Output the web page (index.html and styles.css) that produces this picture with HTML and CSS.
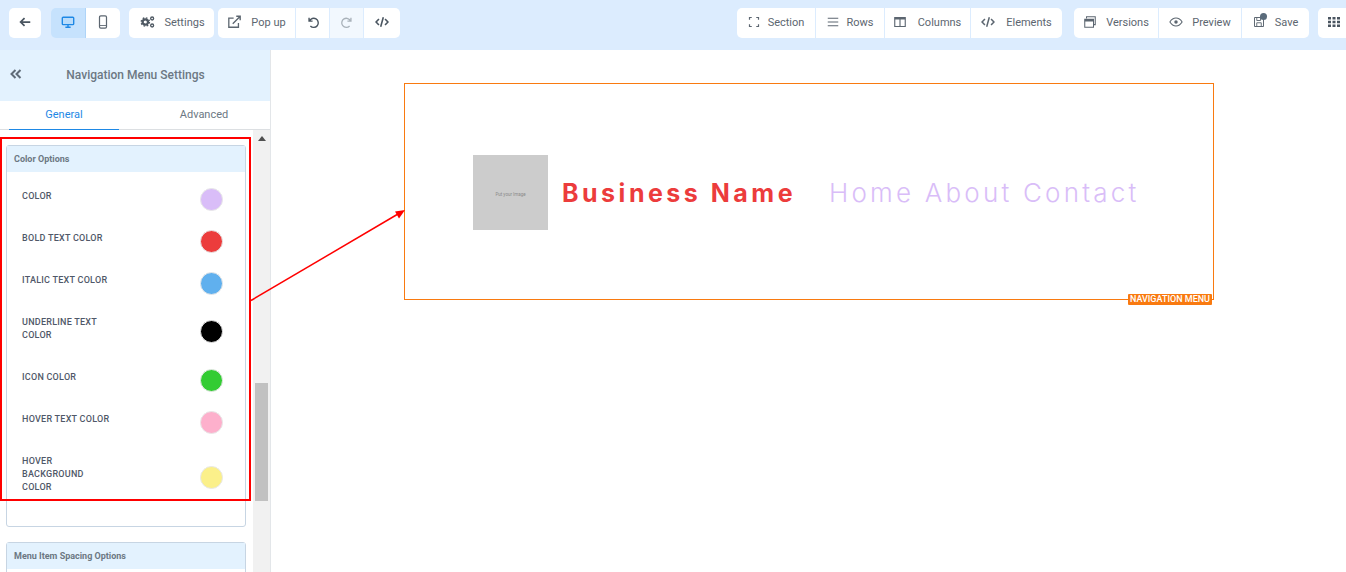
FILE: index.html
```html
<!DOCTYPE html>
<html lang="en">
<head>
    <meta charset="UTF-8">
    <meta name="viewport" content="width=device-width, initial-scale=1.0">
    <title>Navigation Menu Settings</title>
    <link rel="stylesheet" href="styles.css">
</head>
<body>
    <header class="toolbar">
        <div class="group back-group">
            <button class="tool icon-only"><svg class="icon" viewBox="0 0 16 16"><path d="M14 8H3M7.500 3.500 3 8l4.500 4.500" fill="none" stroke="#4a5560" stroke-width="2"/></svg></button>
        </div>
        <div class="group device-group">
            <button class="tool device active"><svg class="icon" viewBox="0 0 16 16"><rect x="1.500" y="2.500" width="13" height="8.500" rx="1" fill="#b9dcfb" stroke="#1e88e5" stroke-width="1.600"/><path d="M5 14h6M8 11v3" stroke="#1e88e5" stroke-width="1.600"/></svg></button>
            <button class="tool device device-phone"><svg class="icon" viewBox="0 0 16 16"><rect x="4" y="1" width="8" height="14" rx="1.500" fill="none" stroke="#5c6670" stroke-width="1.400"/><path d="M4.500 12h7" stroke="#5c6670"/></svg></button>
        </div>
        <div class="group">
            <button class="tool settings"><svg class="icon icon-wide" viewBox="0 0 16 16"><circle cx="5.500" cy="8" r="3.100" fill="none" stroke="#4f5963" stroke-width="2.600"/><circle cx="5.500" cy="8" r="4.700" fill="none" stroke="#4f5963" stroke-width="1.600" stroke-dasharray="1.900 1.800"/><circle cx="13.300" cy="4" r="1.700" fill="none" stroke="#4f5963" stroke-width="1.500"/><circle cx="13.300" cy="12" r="1.700" fill="none" stroke="#4f5963" stroke-width="1.500"/></svg>Settings</button>
        </div>
        <div class="group">
            <button class="tool popup"><svg class="icon icon-wide" viewBox="0 0 16 16"><path d="M12.500 9v5h-11V3.500H7" fill="none" stroke="#5c6670" stroke-width="1.500"/><path d="M6 10 14 2M10 1.500h4.500V6" fill="none" stroke="#5c6670" stroke-width="1.600"/></svg>Pop up</button>
            <button class="tool undo icon-only"><svg class="icon" viewBox="0 0 16 16"><path d="M3.500 3v4h4M4 7a5.200 5.200 0 1 1 1 5.500" fill="none" stroke="#4a5560" stroke-width="1.600"/></svg></button>
            <button class="tool undo icon-only disabled"><svg class="icon" viewBox="0 0 16 16"><path d="M12.500 3v4h-4M12 7a5.200 5.200 0 1 0-1 5.500" fill="none" stroke="#a9b2ba" stroke-width="1.500"/></svg></button>
            <button class="tool code icon-only"><svg class="icon" viewBox="0 0 16 16"><path d="M4.500 4.500 1.200 8l3.300 3.500M11.500 4.500 14.800 8l-3.300 3.500M9.500 2.500l-3 11" fill="none" stroke="#4a5560" stroke-width="1.800"/></svg></button>
        </div>
        <div class="spacer"></div>
        <div class="group">
            <button class="tool section"><svg class="icon icon-small" viewBox="0 0 16 16"><path d="M2 5V2h3M11 2h3v3M14 11v3h-3M5 14H2v-3" fill="none" stroke="#5c6670" stroke-width="1.600"/></svg>Section</button>
            <button class="tool rows"><svg class="icon icon-small" viewBox="0 0 16 16"><path d="M1 3h14M1 8h14M1 13h14" stroke="#5c6670" stroke-width="1.500"/></svg>Rows</button>
            <button class="tool columns"><svg class="icon icon-small" viewBox="0 0 16 16"><path d="M1 2h14v12H1z" fill="none" stroke="#5c6670" stroke-width="1.500"/><path d="M1 3.500h14" stroke="#5c6670" stroke-width="2.500"/><path d="M8 3v11" stroke="#5c6670" stroke-width="1.500"/></svg>Columns</button>
            <button class="tool elements"><svg class="icon" viewBox="0 0 16 16"><path d="M4.500 4.500 1.200 8l3.300 3.500M11.500 4.500 14.800 8l-3.300 3.500M9.500 2.500l-3 11" fill="none" stroke="#5c6670" stroke-width="1.700"/></svg>Elements</button>
        </div>
        <div class="group right-group">
            <button class="tool versions"><svg class="icon" viewBox="0 0 16 16"><path d="M4 4V2h10v9h-2" fill="none" stroke="#5c6670" stroke-width="1.200"/><path d="M2 5h10v9H2z" fill="none" stroke="#5c6670" stroke-width="1.200"/><path d="M2 5.500h10v2H2z" fill="#5c6670"/></svg>Versions</button>
            <button class="tool preview"><svg class="icon" viewBox="0 0 16 16"><path d="M1 8c2-3.200 4.300-4.500 7-4.500s5 1.300 7 4.500c-2 3.200-4.300 4.500-7 4.500S3 11.200 1 8z" fill="none" stroke="#5c6670" stroke-width="1.200"/><circle cx="8" cy="8" r="2" fill="#5c6670"/></svg>Preview</button>
            <button class="tool save"><span class="save-icon"><svg class="icon icon-small" viewBox="0 0 16 16"><path d="M2 2h11l1 1v11H2z" fill="none" stroke="#5c6670" stroke-width="1.300"/><path d="M5 2v4h5V2M5 14V9h6v5" fill="none" stroke="#5c6670" stroke-width="1.200"/></svg><span class="dot"></span></span>Save</button>
        </div>
        <div class="group grid-group">
            <button class="tool grid-button"><svg class="icon icon-small" viewBox="0 0 12 12"><path d="M0 1h3v2.500H0zM4.500 1h3v2.500h-3zM9 1h3v2.500H9zM0 4.800h3v2.500H0zM4.500 4.800h3v2.500h-3zM9 4.800h3v2.500H9zM0 8.600h3v2.500H0zM4.500 8.600h3v2.500h-3zM9 8.600h3v2.500H9z" fill="#4a5560"/></svg></button>
        </div>
    </header>

    <div class="main">
        <aside class="sidebar">
            <div class="sidebar-head">
                <svg class="collapse" viewBox="0 0 12 10"><path d="M5.500 1 1.500 5l4 4M10.500 1l-4 4 4 4" fill="none" stroke="#5f6b78" stroke-width="2"/></svg>
                <span class="sidebar-title">Navigation Menu Settings</span>
            </div>
            <div class="tabs">
                <div class="tab tab-active">General</div>
                <div class="tab">Advanced</div>
            </div>
            <div class="scroll-area">
                <div class="panels">
                    <section class="panel">
                        <h3 class="panel-head">Color Options</h3>
                        <div class="color-list">
                            <div class="color-row"><span class="color-label">COLOR</span><span class="swatch swatch-lilac"></span></div>
                            <div class="color-row"><span class="color-label">BOLD TEXT COLOR</span><span class="swatch swatch-red"></span></div>
                            <div class="color-row"><span class="color-label">ITALIC TEXT COLOR</span><span class="swatch swatch-blue"></span></div>
                            <div class="color-row"><span class="color-label">UNDERLINE TEXT COLOR</span><span class="swatch swatch-black"></span></div>
                            <div class="color-row"><span class="color-label">ICON COLOR</span><span class="swatch swatch-green"></span></div>
                            <div class="color-row"><span class="color-label">HOVER TEXT COLOR</span><span class="swatch swatch-pink"></span></div>
                            <div class="color-row"><span class="color-label">HOVER BACKGROUND COLOR</span><span class="swatch swatch-yellow"></span></div>
                        </div>
                    </section>
                    <section class="panel">
                        <h3 class="panel-head">Menu Item Spacing Options</h3>
                        <div class="panel-body"></div>
                    </section>
                </div>
                <div class="scrollbar">
                    <span class="scroll-up"></span>
                    <span class="scroll-thumb"></span>
                </div>
            </div>
        </aside>

        <main class="canvas">
            <div class="nav-element">
                <div class="image-holder"><span>Put your Image</span></div>
                <span class="brand">Business Name</span>
                <nav class="nav-links">Home About Contact</nav>
                <span class="element-tag">NAVIGATION MENU</span>
            </div>
        </main>
    </div>

    <!-- annotation drawn over the screenshot -->
    <div class="callout-box"></div>
    <svg class="callout-arrow" viewBox="0 0 160 100" width="160" height="100">
        <path d="M1 94.500 148 8" fill="none" stroke="#f00" stroke-width="1.500"/>
        <path d="M155 4 145 5.500 149 12.500z" fill="#f00"/>
    </svg>
</body>
</html>
```

FILE: styles.css
```css
* {
    box-sizing: border-box;
}
html, body {
    height: 100%;
}
body {
    font-family: Roboto, sans-serif;
    background: #fff;
    color: #5c6670;
    margin: 0;
    overflow: hidden;
    display: flex;
    flex-direction: column;
}
.toolbar {
    height: 50px;
    flex: none;
    background: #dcecfe;
    display: flex;
    align-items: flex-start;
    padding: 8px 0 0 9px;
    gap: 4px;
    overflow: hidden;
}
.group {
    display: flex;
    gap: 1px;
    height: 30px;
    border-radius: 5px;
    overflow: hidden;
    flex: none;
}
.back-group {
    margin-right: 6px;
}
.device-group {
    margin-right: 5px;
    gap: 0;
}
.spacer {
    flex: 1;
}
.right-group {
    margin-left: 8px;
}
.grid-group {
    margin-left: 5px;
    width: 28px;
    border-radius: 5px 0 0 5px;
}
.tool {
    border: none;
    background: #fff;
    color: #5c6670;
    font-family: Roboto, sans-serif;
    font-size: 11px;
    display: flex;
    align-items: center;
    justify-content: center;
    padding: 0 0 2px;
    height: 30px;
}
.icon {
    width: 14px;
    height: 14px;
    margin-right: 9px;
    flex: none;
}
.icon-wide {
    width: 15px;
    margin-right: 9px;
}
.icon-small {
    width: 12px;
    height: 12px;
    margin-right: 10px;
}
.icon-only {
    width: 32px;
}
.icon-only .icon, .device .icon, .grid-button .icon {
    margin-right: 0;
}
.device {
    width: 35px;
}
.device-phone {
    width: 34px;
}
.device.active {
    background: #c6e2fd;
    border-right: 1px solid #aed4f8;
}
.undo {
    width: 33px;
}
.code {
    width: 36px;
}
.disabled {
    background: #f2f8fe;
}
.settings { width: 85px; padding-left: 2px; }
.popup { width: 77px; }
.section { width: 78px; }
.section .icon { margin-right: 8px; }
.rows { width: 68px; }
.rows .icon { margin-right: 8px; }
.columns { width: 85px; }
.columns .icon { margin-right: 12px; }
.elements { width: 91px; }
.elements .icon { margin-right: 11px; }
.versions { width: 84px; }
.preview { width: 82px; }
.save { width: 67px; }
.grid-button { width: 28px; justify-content: flex-start; padding-left: 10px; }
.save-icon {
    position: relative;
    display: flex;
}
.dot {
    position: absolute;
    top: -3px;
    left: 7px;
    width: 7px;
    height: 7px;
    border-radius: 50%;
    background: #5a6b7b;
}

.main {
    flex: 1;
    display: flex;
    min-height: 0;
}
.sidebar {
    width: 271px;
    flex: none;
    border-right: 1px solid #e3e6e9;
    display: flex;
    flex-direction: column;
    min-height: 0;
}
.sidebar-head {
    height: 51px;
    flex: none;
    background: #e3f2fe;
    position: relative;
    display: flex;
    align-items: center;
    justify-content: center;
    padding-bottom: 2px;
}
.collapse {
    position: absolute;
    left: 10px;
    top: 19px;
    width: 12px;
    height: 10px;
}
.sidebar-title {
    font-size: 12px;
    font-weight: 500;
    color: #6c7883;
    margin-left: 1px;
}
.tabs {
    height: 29px;
    flex: none;
    display: flex;
    padding-left: 9px;
    gap: 30px;
    border-bottom: 1px solid #dcdfe2;
}
.tab {
    width: 110px;
    height: 29px;
    font-size: 11px;
    line-height: 27px;
    text-align: center;
    color: #6c7883;
}
.tab-active {
    color: #1e88e5;
    border-bottom: 1px solid #1e88e5;
}
.scroll-area {
    flex: 1;
    min-height: 0;
    display: flex;
}
.panels {
    width: 253px;
    flex: none;
    padding: 15px 7px 0 6px;
    overflow: hidden;
}
.panel {
    border: 1px solid #c7d5e3;
    border-radius: 3px;
    margin-bottom: 15px;
}
.panel-head {
    margin: 0;
    height: 26px;
    padding-left: 7px;
    font-size: 9px;
    font-weight: 700;
    line-height: 26px;
    color: #6c7883;
    background: #e3f2fe;
}
.panel-body {
    height: 40px;
}
.color-list {
    display: flex;
    flex-direction: column;
    gap: 24px;
    padding: 18px 22px 27px 15px;
}
.color-row {
    display: flex;
    align-items: center;
    justify-content: space-between;
}
.color-label {
    width: 90px;
    font-size: 9px;
    font-weight: 500;
    letter-spacing: 0.250px;
    line-height: 13px;
    padding-bottom: 5px;
    color: #4f5868;
}
.swatch {
    width: 23px;
    height: 23px;
    margin: -3px 0;
    border-radius: 50%;
    flex: none;
    border: 1px solid #e8e8e8;
}
.swatch-lilac { background: #d9bdf8; }
.swatch-red { background: #ec3c3c; }
.swatch-blue { background: #60b0ee; }
.swatch-black { background: #000; }
.swatch-green { background: #33cc33; }
.swatch-pink { background: #fdb0cc; }
.swatch-yellow { background: #fbf08a; }
.scrollbar {
    flex: 1;
    background: #f1f1f1;
    padding: 0 2px;
    display: flex;
    flex-direction: column;
    align-items: center;
}
.scroll-up {
    margin-top: 6px;
    border-left: 4px solid transparent;
    border-right: 4px solid transparent;
    border-bottom: 5px solid #505050;
}
.scroll-thumb {
    margin-top: 242px;
    width: 13px;
    height: 118px;
    background: #c1c1c1;
}

.canvas {
    flex: 1;
    min-width: 0;
    padding: 33px 0 0 133px;
}
.nav-element {
    position: relative;
    width: 810px;
    height: 217px;
    border: 1px solid #f97a10;
    display: flex;
    align-items: center;
    padding: 2px 0 0 68px;
}
.image-holder {
    width: 75px;
    height: 75px;
    background: #cccccc;
    display: flex;
    align-items: center;
    justify-content: center;
    padding-top: 4px;
    margin-right: 14px;
    flex: none;
}
.image-holder span {
    font-size: 4.500px;
    color: #8a8a8a;
}
.brand {
    font-family: Inter, sans-serif;
    font-size: 25px;
    font-weight: 700;
    letter-spacing: 3.500px;
    color: #ec3c3c;
    margin-right: 33px;
    white-space: nowrap;
}
.nav-links {
    font-family: Inter, sans-serif;
    font-size: 26px;
    font-weight: 300;
    letter-spacing: 3.200px;
    color: #d9bdf8;
    white-space: nowrap;
}
.element-tag {
    position: absolute;
    right: 1px;
    bottom: -6px;
    height: 11px;
    padding: 0 2px;
    border-radius: 1px;
    background: #f97a10;
    color: #fff;
    font-size: 9px;
    font-weight: 500;
    line-height: 11px;
}

.callout-box {
    position: absolute;
    left: 0;
    top: 137px;
    width: 251px;
    height: 364px;
    border: 2px solid #f00;
}
.callout-arrow {
    position: absolute;
    left: 250px;
    top: 206px;
}
```
